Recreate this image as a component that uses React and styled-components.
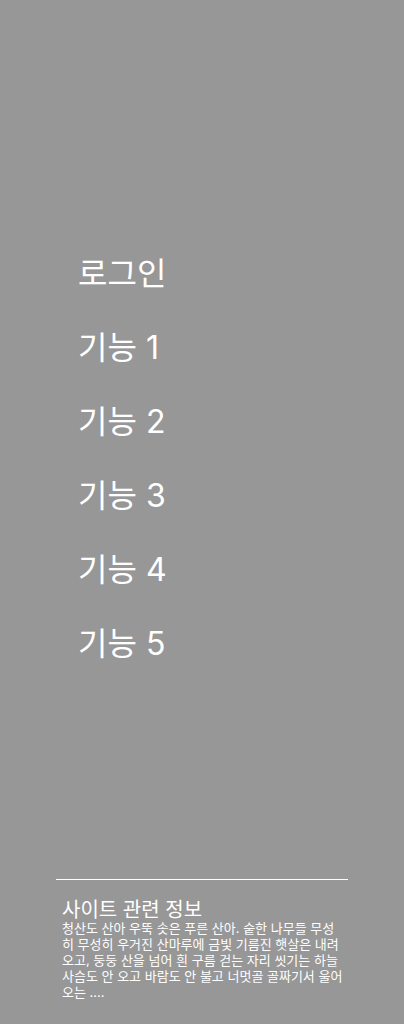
import React from "react";
import styled, { createGlobalStyle } from "styled-components";

const GlobalStyle = createGlobalStyle`
  *, *::before, *::after { box-sizing: border-box; }
  body {
    margin: 0;
    background: #979797;
    color: #fff;
    font-family: Inter, "Noto Sans CJK KR", sans-serif;
  }
`;

const Drawer = styled.div`
  display: flex;
  flex-direction: column;
  justify-content: space-between;
  min-height: 100vh;
  padding: 254px 56px 24px;
`;

const Menu = styled.ul`
  display: flex;
  flex-direction: column;
  gap: 34px;
  margin: 0;
  padding: 0 0 0 22px;
  list-style: none;
`;

const MenuLink = styled.a`
  display: block;
  color: inherit;
  font-size: 32px;
  line-height: 40px;
  text-decoration: none;
`;

const SiteInfo = styled.footer`
  border-top: 1px solid #fff;
  padding: 20px 5px 0 6px;
`;

const InfoTitle = styled.h2`
  margin: 0;
  font-size: 20px;
  font-weight: 400;
  line-height: 20px;
`;

const InfoText = styled.p`
  margin: 0;
  font-size: 13px;
  line-height: 16px;
  word-break: break-all;
`;

const items = ["로그인", "기능 1", "기능 2", "기능 3", "기능 4", "기능 5"];

export default function App() {
  return (
    <>
      <GlobalStyle />
      <Drawer>
        <nav>
          <Menu>
            {items.map((item) => (
              <li key={item}>
                <MenuLink href="#">{item}</MenuLink>
              </li>
            ))}
          </Menu>
        </nav>
        <SiteInfo>
          <InfoTitle>사이트 관련 정보</InfoTitle>
          <InfoText>
            청산도 산아 우뚝 솟은 푸른 산아. 숱한 나무들 무성히 무성히 우거진
            산마루에 금빛 기름진 햇살은 내려오고, 둥둥 산을 넘어 흰 구름 걷는
            자리 씻기는 하늘 사슴도 안 오고 바람도 안 불고 너멋골 골짜기서
            울어오는 ....
          </InfoText>
        </SiteInfo>
      </Drawer>
    </>
  );
}
